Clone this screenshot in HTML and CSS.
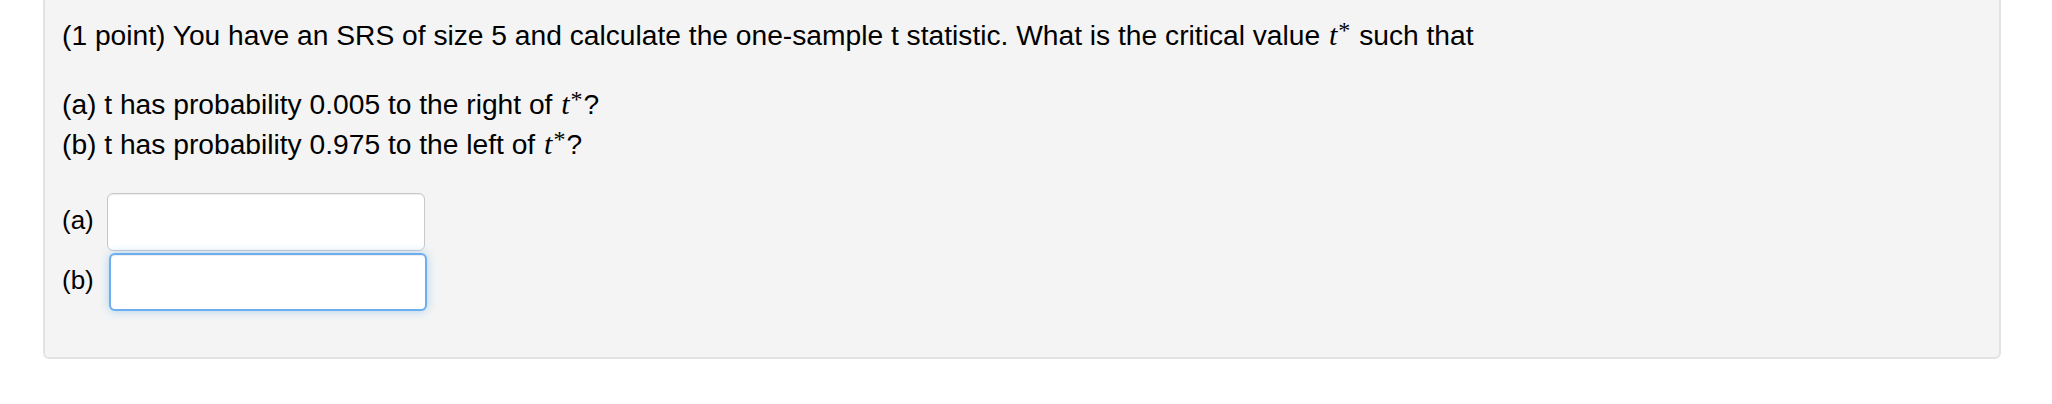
FILE: index.html
```html
<!DOCTYPE html>
<html>
<head>
<meta charset="utf-8">
<link rel="stylesheet" href="styles.css">
</head>
<body>
<div class="page">
  <div class="problem">
    <p class="para">(1 point) You have an SRS of size 5 and calculate the one-sample t statistic. What is the critical value <span class="math"><i>t</i><sup>*</sup></span> such that</p>
    <p class="para">(a) t has probability 0.005 to the right of <span class="math"><i>t</i><sup>*</sup></span>?<br>(b) t has probability 0.975 to the left of <span class="math"><i>t</i><sup>*</sup></span>?</p>
    <div class="answers">
      <div class="row"><span class="label">(a)</span><span class="field"></span></div>
      <div class="row"><span class="label">(b)</span><span class="field focused"></span></div>
    </div>
  </div>
</div>
</body>
</html>
```
FILE: styles.css
```css
html, body {
  margin: 0;
  padding: 0;
  background: #ffffff;
}
.page {
  padding: 0 51px 0 43px;
}
.problem {
  margin-top: -4px;
  background: #f4f4f4;
  border: 2px solid #e3e3e3;
  border-radius: 6px;
  padding: 17px 17px 46px 17px;
  font-family: "Liberation Sans", Arial, Helvetica, sans-serif;
  font-size: 28.2px;
  line-height: 39px;
  color: #000;
}
.para {
  margin: 0 0 29px 0;
}
.math {
  font-family: "Liberation Serif", "Times New Roman", serif;
  font-size: 30px;
  padding-left: 1px;
}
.math i {
  font-style: italic;
}
.math sup {
  font-style: normal;
  font-size: 24px;
  line-height: 0;
  vertical-align: 7px;
  margin-left: 1px;
  margin-right: 1px;
}
.answers {
  display: flex;
  flex-direction: column;
  gap: 2px;
}
.row {
  display: flex;
  align-items: center;
  gap: 13px;
}
.label {
  font-size: 26px;
  line-height: 30px;
  margin-top: -4px;
}
.field {
  display: block;
  box-sizing: border-box;
  width: 318px;
  height: 58px;
  background: #ffffff;
  border: 1.5px solid #c8c8c8;
  border-radius: 6px;
  box-shadow: inset 0 1px 1px rgba(0, 0, 0, 0.075);
}
.field.focused {
  margin-left: 2px;
  border: 2px solid rgba(82, 160, 236, 0.85);
  box-shadow: inset 0 1px 1px rgba(0, 0, 0, 0.075), 0 0 10px rgba(82, 168, 236, 0.45);
}
```
